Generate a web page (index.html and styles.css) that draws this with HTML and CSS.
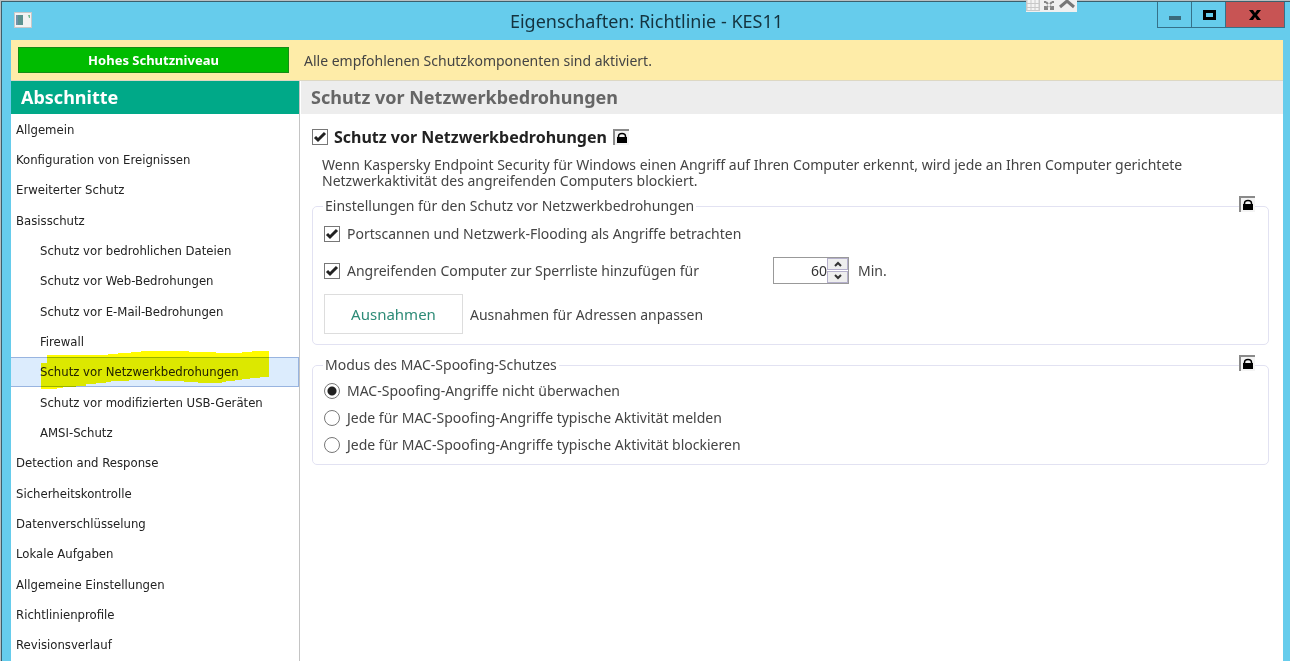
FILE: index.html
```html
<!DOCTYPE html>
<html lang="de">
<head>
    <meta charset="UTF-8">
    <meta name="viewport" content="width=device-width, initial-scale=1.0">
    <title>Eigenschaften: Richtlinie - KES11</title>
    <link rel="stylesheet" href="styles.css">
</head>
<body>

<svg class="symbols" aria-hidden="true">
    <symbol id="lock" viewBox="0 0 16 16">
        <path d="M2 2H16V16H2Z" fill="#f4f4f4"/>
        <path d="M0 0H16V2H2V16H0Z" fill="#8a8a8a"/>
        <path d="M5.500 9V7.500Q5.500 4.500 9 4.500T12.500 7.500V9" fill="none" stroke="#000" stroke-width="1.500"/>
        <path d="M4 8H14V14H4Z" fill="#000"/>
    </symbol>
</svg>

<div class="window">
    <header class="titlebar">
        <svg class="app-icon" viewBox="0 0 18 16" aria-hidden="true">
            <rect x="0.5" y="0.5" width="17" height="15" fill="#f2f2f2" stroke="#c8c8c8"/>
            <rect x="2" y="3" width="7" height="10" fill="#5b9290"/>
            <rect x="2" y="3" width="2" height="10" fill="#7191a8"/>
            <path d="M14 3H16V6H15Z" fill="#75ba91"/>
        </svg>
        <h1>Eigenschaften: Richtlinie - KES11</h1>
        <div class="window-buttons">
            <button type="button" aria-label="Minimieren"><svg width="14" height="14" viewBox="0 0 14 14"><rect x="1" y="8" width="12" height="4" fill="#3a6a7c"/></svg></button>
            <button type="button" aria-label="Maximieren"><svg width="14" height="14" viewBox="0 0 14 14"><path d="M1 2H14V12H1ZM4 5V9H11V5Z" fill="#000" fill-rule="evenodd"/></svg></button>
            <button type="button" class="close" aria-label="Schließen"><svg width="14" height="14" viewBox="0 0 14 14"><path d="M1 2H5L7 5L9 2H13L9 7L13 12H9L7 9L5 12H1L5 7Z" fill="#000"/></svg></button>
        </div>
    </header>

    <div class="remote-bar">
        <svg viewBox="0 0 51 13" aria-hidden="true">
            <rect width="51" height="13" fill="#f0f0f0"/>
            <rect width="14" height="12" fill="#c9c9c9"/>
            <path d="M3 1V11M7 1V11M11 1V11" stroke="#f4f4f4" stroke-width="3" stroke-dasharray="3 1"/>
            <path d="M19 4V2M27 4V2M19 7V10H22M27 7V10H24M20 3L22 5M26 3L24 5M20 9L22 7M26 9L24 7" fill="none" stroke="#858585" stroke-width="2"/>
            <path d="M34 8L41 2L48 8" fill="none" stroke="#777" stroke-width="3"/>
        </svg>
    </div>

    <div class="status">
        <strong class="level">Hohes Schutzniveau</strong>
        <span>Alle empfohlenen Schutzkomponenten sind aktiviert.</span>
    </div>

    <div class="content">
        <nav class="sidebar">
            <h2>Abschnitte</h2>
            <ul>
                <li><a href="#">Allgemein</a></li>
                <li><a href="#">Konfiguration von Ereignissen</a></li>
                <li><a href="#">Erweiterter Schutz</a></li>
                <li><a href="#">Basisschutz</a></li>
                <li class="sub"><a href="#">Schutz vor bedrohlichen Dateien</a></li>
                <li class="sub"><a href="#">Schutz vor Web-Bedrohungen</a></li>
                <li class="sub"><a href="#">Schutz vor E-Mail-Bedrohungen</a></li>
                <li class="sub"><a href="#">Firewall</a></li>
                <li class="sub active">
                    <svg class="marker" viewBox="0 0 228 38" aria-hidden="true">
                        <path d="M6 4H67V3H77V2H90V1H100V0H148V1H175V2H201V1H211V0H228V26H219V27H209V28H201V29H194V30H185V31H181V32H157V31H143V30H114V29H88V30H70V31H65V32H55V33H45V35H35V36H22V37H16V38H0V12H6Z" fill="#fffb00"/>
                    </svg>
                    <a href="#">Schutz vor Netzwerkbedrohungen</a>
                </li>
                <li class="sub"><a href="#">Schutz vor modifizierten USB-Geräten</a></li>
                <li class="sub"><a href="#">AMSI-Schutz</a></li>
                <li><a href="#">Detection and Response</a></li>
                <li><a href="#">Sicherheitskontrolle</a></li>
                <li><a href="#">Datenverschlüsselung</a></li>
                <li><a href="#">Lokale Aufgaben</a></li>
                <li><a href="#">Allgemeine Einstellungen</a></li>
                <li><a href="#">Richtlinienprofile</a></li>
                <li><a href="#">Revisionsverlauf</a></li>
            </ul>
        </nav>

        <main>
            <h2>Schutz vor Netzwerkbedrohungen</h2>
            <div class="panel">
                <div class="feature">
                    <input type="checkbox" id="protection" checked>
                    <label for="protection">Schutz vor Netzwerkbedrohungen</label>
                    <svg class="lock" aria-hidden="true"><use href="#lock"/></svg>
                </div>
                <p class="description">Wenn Kaspersky Endpoint Security für Windows einen Angriff auf Ihren Computer erkennt, wird jede an Ihren Computer gerichtete Netzwerkaktivität des angreifenden Computers blockiert.</p>

                <fieldset class="settings">
                    <legend>Einstellungen für den Schutz vor Netzwerkbedrohungen</legend>
                    <svg class="lock" aria-hidden="true"><use href="#lock"/></svg>
                    <div class="row">
                        <input type="checkbox" id="flooding" checked>
                        <label for="flooding">Portscannen und Netzwerk-Flooding als Angriffe betrachten</label>
                    </div>
                    <div class="row">
                        <div class="block-option">
                            <input type="checkbox" id="block" checked>
                            <label for="block">Angreifenden Computer zur Sperrliste hinzufügen für</label>
                        </div>
                        <div class="spinner">
                            <input type="text" id="minutes" value="60">
                            <div class="arrows">
                                <button type="button" aria-label="Mehr"><svg width="8" height="6" viewBox="0 0 8 6"><path d="M1 5L4 2L7 5" fill="none" stroke="#333" stroke-width="2"/></svg></button>
                                <button type="button" aria-label="Weniger"><svg width="8" height="6" viewBox="0 0 8 6"><path d="M1 1L4 4L7 1" fill="none" stroke="#333" stroke-width="2"/></svg></button>
                            </div>
                        </div>
                        <label for="minutes">Min.</label>
                    </div>
                    <div class="row exceptions">
                        <button type="button">Ausnahmen</button>
                        <span>Ausnahmen für Adressen anpassen</span>
                    </div>
                </fieldset>

                <fieldset class="mode">
                    <legend>Modus des MAC-Spoofing-Schutzes</legend>
                    <svg class="lock" aria-hidden="true"><use href="#lock"/></svg>
                    <div class="row">
                        <input type="radio" name="mac" id="mac-off" checked>
                        <label for="mac-off">MAC-Spoofing-Angriffe nicht überwachen</label>
                    </div>
                    <div class="row">
                        <input type="radio" name="mac" id="mac-report">
                        <label for="mac-report">Jede für MAC-Spoofing-Angriffe typische Aktivität melden</label>
                    </div>
                    <div class="row">
                        <input type="radio" name="mac" id="mac-block">
                        <label for="mac-block">Jede für MAC-Spoofing-Angriffe typische Aktivität blockieren</label>
                    </div>
                </fieldset>
            </div>
        </main>
    </div>
</div>

</body>
</html>
```

FILE: styles.css
```css
* {
    box-sizing: border-box;
    margin: 0;
    padding: 0;
}

body {
    font-family: "Noto Sans", "Open Sans", sans-serif;
    font-size: 14px;
    color: #444;
    background: #b9bec0;
    min-height: 100vh;
    display: flex;
    padding: 1px 0 0 1px;
}

button, input {
    font: inherit;
}

.symbols {
    position: absolute;
    width: 0;
    height: 0;
}

/* Window frame */
.window {
    position: relative;
    flex: 1;
    display: flex;
    flex-direction: column;
    background: #66ccec;
    border: 1px solid #3c5f6c;
    border-width: 1px 0 0 1px;
    padding: 0 7px 0 9px;
}

.titlebar {
    display: flex;
    align-items: center;
    height: 38px;
}

.app-icon {
    width: 18px;
    height: 16px;
    margin: 0 0 2px 3px;
}

h1 {
    flex: 1;
    padding-left: 104px;
    font-size: 18px;
    font-weight: normal;
    line-height: 34px;
    color: #14333f;
    text-align: center;
}

.window-buttons {
    display: flex;
    align-self: flex-start;
    border: 1px solid #35718a;
    border-top: 0;
    margin-right: -2px;
}

.window-buttons button {
    display: flex;
    align-items: center;
    justify-content: center;
    width: 34px;
    height: 25px;
    background: none;
    border: 0;
    border-right: 1px solid #35718a;
}

.window-buttons .close {
    width: 58px;
    background: #c85454;
    border-right: 0;
}

.remote-bar {
    position: absolute;
    top: -3px;
    right: 213px;
    width: 51px;
    height: 13px;
}

.remote-bar svg {
    display: block;
}

/* Status line */
.status {
    display: flex;
    align-items: center;
    gap: 15px;
    height: 41px;
    padding: 0 7px;
    background: #feeca8;
    border-bottom: 1px solid #ddd8c4;
}

.level {
    width: 271px;
    border: 1px solid #168c16;
    background: #00bc00;
    color: #fff;
    font-size: 13px;
    line-height: 24px;
    text-align: center;
}

.content {
    flex: 1;
    display: flex;
    background: #fff;
}

.content h2 {
    height: 33px;
    padding-left: 10px;
    font-size: 18px;
    line-height: 33px;
}

/* Sidebar */
.sidebar {
    display: flex;
    flex-direction: column;
    width: 289px;
    border-right: 1px solid #c4c4c4;
}

.sidebar h2 {
    background: #00a988;
    color: #fff;
}

.sidebar ul {
    flex: 1;
    display: flex;
    flex-direction: column;
    list-style: none;
    padding-bottom: 1px;
    font-family: "DejaVu Sans Condensed", "Noto Sans", sans-serif;
    font-size: 13px;
}

.sidebar li {
    position: relative;
    flex: 1;
    display: flex;
    align-items: center;
    min-height: 30px;
    padding: 0 5px;
    border: 1px solid transparent;
    border-left: 0;
}

.sidebar .sub {
    padding-left: 29px;
}

.sidebar a {
    color: #222;
    text-decoration: none;
}

.sidebar .active {
    background: #dcecfd;
    border-color: #98b4e0;
}

.marker {
    position: absolute;
    top: -7px;
    left: 30px;
    width: 228px;
    height: 38px;
    mix-blend-mode: multiply;
}

/* Main panel */
main {
    flex: 1;
}

main h2 {
    margin-left: 1px;
    background: #ededed;
    color: #666;
}

.panel {
    padding: 9px 14px 9px 12px;
}

.feature {
    display: flex;
    align-items: center;
    gap: 6px;
    height: 28px;
    color: #222;
    font-size: 16px;
    font-weight: bold;
}

.lock {
    width: 16px;
    height: 16px;
}

.description {
    padding: 6px 80px 8px 10px;
    line-height: 16px;
}

fieldset {
    position: relative;
    border: 1px solid #e2e2f2;
    border-radius: 5px;
    padding: 0 11px;
}

legend {
    padding: 0 2px;
    line-height: 18px;
    margin-left: -1px;
}

fieldset .lock {
    position: absolute;
    top: -19px;
    right: 13px;
}

.row {
    display: flex;
    align-items: center;
    gap: 7px;
}

.settings {
    margin-bottom: 11px;
    padding-bottom: 10px;
}

.settings .row {
    min-height: 37px;
}

.block-option {
    display: flex;
    align-items: center;
    gap: 7px;
    width: 442px;
}

.mode {
    padding-top: 3px;
    padding-bottom: 6px;
}

.mode .row {
    height: 27px;
}

/* Check boxes and radios */
input[type="checkbox"], input[type="radio"] {
    appearance: none;
    flex: none;
    width: 16px;
    height: 16px;
    border: 1px solid #777;
    background: #fff;
}

input[type="checkbox"]:checked {
    background: url("data:image/svg+xml,%3Csvg xmlns='http://www.w3.org/2000/svg' viewBox='0 0 14 14'%3E%3Cpath d='M2 7L5 10L12 3' fill='none' stroke='%23222' stroke-width='3'/%3E%3C/svg%3E");
}

input[type="radio"] {
    border-radius: 50%;
}

input[type="radio"]:checked {
    background: radial-gradient(circle, #222 0 4px, #fff 5px);
}

.spinner {
    display: flex;
    width: 76px;
    height: 27px;
    margin-right: 2px;
    border: 1px solid #999;
}

.spinner input {
    flex: 1;
    min-width: 0;
    border: 0;
    color: #333;
    text-align: right;
}

.arrows {
    display: flex;
    flex-direction: column;
    gap: 1px;
    width: 21px;
}

.arrows button {
    flex: 1;
    display: flex;
    align-items: center;
    justify-content: center;
    background: #eee;
    border: 1px solid #b5b0cc;
}

.exceptions {
    margin-top: 5px;
}

.exceptions button {
    width: 139px;
    height: 40px;
    background: #fff;
    border: 1px solid #ddd;
    color: #2d8b77;
    font-size: 15px;
}
```
